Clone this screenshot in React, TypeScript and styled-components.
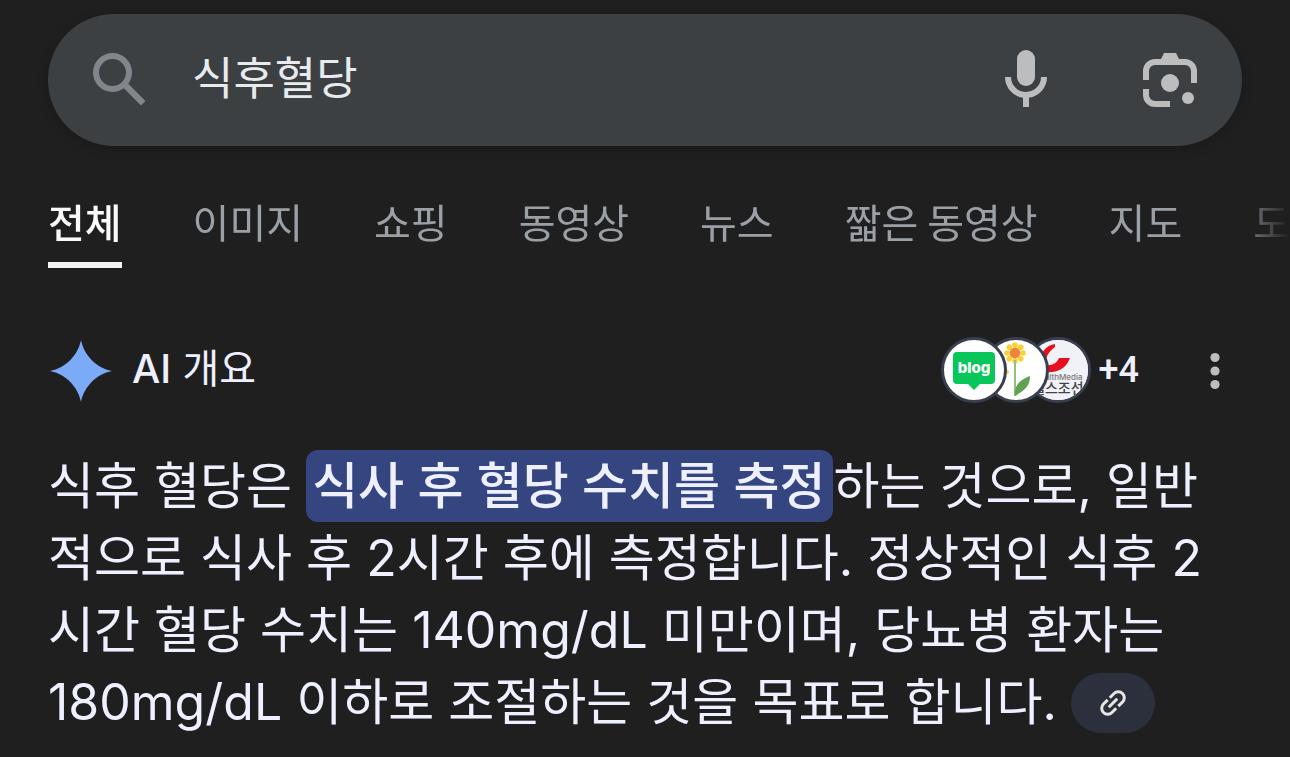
import React from "react";
import styled, { createGlobalStyle } from "styled-components";

const GlobalStyle = createGlobalStyle`
  * { box-sizing: border-box; }
  body {
    margin: 0;
    background: #1f1f1f;
    color: #eeefff;
    font-family: "Inter", "Noto Sans CJK KR", sans-serif;
    overflow-x: hidden;
  }
  button { border: 0; background: none; padding: 0; color: inherit; font: inherit; cursor: pointer; }
`;

const Page = styled.div`
  padding: 14px 0 24px;
`;

const SearchBar = styled.form`
  display: flex;
  align-items: center;
  height: 132px;
  margin: 0 48px;
  padding: 0 36px;
  border-radius: 66px;
  background: #3c4043;
  box-shadow: 0 3px 12px rgba(0, 0, 0, 0.2);
`;

const IconButton = styled.button<{ $color: string }>`
  flex: none;
  display: flex;
  color: ${(p) => p.$color};
`;

const Icon = styled.svg<{ $size: number; $color?: string }>`
  display: block;
  flex: none;
  width: ${(p) => p.$size}px;
  height: ${(p) => p.$size}px;
  fill: ${(p) => p.$color ?? "currentColor"};
`;

const SearchInput = styled.input`
  flex: 1;
  min-width: 0;
  margin: 0 36px;
  padding: 0 0 10px;
  border: 0;
  outline: 0;
  background: none;
  color: #e8eaed;
  font: 400 45px "Noto Sans CJK KR", sans-serif;
`;

const BarActions = styled.div`
  display: flex;
  gap: 72px;
`;

const Tabs = styled.nav`
  display: flex;
  gap: 71px;
  margin-top: 40px;
  padding: 8px 0 0 48px;
  overflow: hidden;
  mask-image: linear-gradient(to right, #000 calc(100% - 60px), transparent);
`;

const Tab = styled.a<{ $active?: boolean }>`
  flex: none;
  height: 74px;
  border-bottom: 6px solid ${(p) => (p.$active ? "#f1f3f4" : "transparent")};
  color: ${(p) => (p.$active ? "#f8f9fa" : "#9aa0a6")};
  font: ${(p) => (p.$active ? 500 : 400)} 40px/54px "Noto Sans CJK KR", sans-serif;
  text-decoration: none;
  white-space: nowrap;
`;

const Overview = styled.section`
  padding: 66px 48px 0;
`;

const OverviewHeader = styled.header`
  display: flex;
  align-items: center;
  height: 72px;
`;

const Title = styled.h1`
  flex: 1;
  margin: 0 0 0 18px;
  padding-bottom: 2px;
  font-size: 40px;
  line-height: 60px;
  font-weight: 400;
`;

const TitleStrong = styled.span`
  font-weight: 500;
`;

const Sources = styled.button`
  display: flex;
  align-items: center;
  font: 500 36px "Roboto", sans-serif;
`;

const FaviconStack = styled.span`
  display: flex;
  margin-right: 8px;
`;

const Favicon = styled.svg<{ $level: number }>`
  position: relative;
  z-index: ${(p) => p.$level};
  display: block;
  width: 66px;
  height: 66px;
  border: 3px solid #3a3f50;
  border-radius: 50%;
  background: #fff;
  font-family: "Inter", "Noto Sans CJK KR", sans-serif;

  &:not(:first-child) {
    margin-left: -24px;
  }
`;

const MenuButton = styled(IconButton)`
  margin: 0 -12px 0 43px;
`;

const Summary = styled.p`
  margin: 44px 0 0;
  padding-right: 24px;
  font-size: 50px;
  line-height: 72px;
`;

const Highlight = styled.mark`
  padding: 6px 8px 6px 6px;
  border-radius: 12px;
  background: #35457f;
  color: inherit;
  font-weight: 500;
`;

const LinkChip = styled.button`
  display: inline-flex;
  align-items: center;
  justify-content: center;
  width: 84px;
  height: 60px;
  margin-bottom: 6px;
  border-radius: 30px;
  background: #2c303d;
  color: #e8e8e3;
  vertical-align: middle;
`;

const tabs = ["전체", "이미지", "쇼핑", "동영상", "뉴스", "짧은 동영상", "지도", "도서"];

const petals = [0, 45, 90, 135, 180, 225, 270, 315];

export default function App() {
  return (
    <>
      <GlobalStyle />
      <Page>
        <SearchBar role="search" onSubmit={(e) => e.preventDefault()}>
          <IconButton $color="#80868b" type="submit" aria-label="검색">
            <Icon $size={72} viewBox="0 0 24 24">
              <path d="M20.49 19l-5.73-5.73C15.53 12.2 16 10.91 16 9.5A6.5 6.5 0 1 0 9.5 16c1.41 0 2.7-.47 3.77-1.24L19 20.49 20.49 19zM5 9.5C5 7.01 7.01 5 9.5 5S14 7.01 14 9.5 11.99 14 9.5 14 5 11.99 5 9.5z" />
            </Icon>
          </IconButton>
          <SearchInput type="text" aria-label="검색어" defaultValue="식후혈당" />
          <BarActions>
            <IconButton $color="#bdbdbd" type="button" aria-label="음성 검색">
              <Icon $size={72} viewBox="0 0 24 24">
                <rect x="9" y="2" width="6" height="12" rx="3" />
                <path d="M5 11a7 7 0 0 0 6 6.92V21h2v-3.08A7 7 0 0 0 19 11h-2a5 5 0 0 1-10 0z" />
              </Icon>
            </IconButton>
            <IconButton $color="#bdbdbd" type="button" aria-label="이미지로 검색">
              <Icon $size={72} viewBox="0 0 24 24">
                <circle cx="12" cy="13" r="3" />
                <circle cx="18" cy="18" r="2" />
                <path d="M3 12V9a4 4 0 0 1 4-4h2l1-2h4l1 2h2a4 4 0 0 1 4 4v4h-2V9a2 2 0 0 0-2-2H7a2 2 0 0 0-2 2v3zM3 15h2v2a2 2 0 0 0 2 2h5v2H7a4 4 0 0 1-4-4z" />
              </Icon>
            </IconButton>
          </BarActions>
        </SearchBar>

        <Tabs>
          {tabs.map((t, i) => (
            <Tab key={t} href="#" $active={i === 0}>{t}</Tab>
          ))}
        </Tabs>

        <Overview>
          <OverviewHeader>
            <Icon $size={66} $color="#7baaf7" viewBox="0 0 66 66">
              <path d="M33 3C36 18 48 31 64 34C48 37 36 50 33 65C30 50 18 37 2 34C18 31 30 18 33 3z" />
            </Icon>
            <Title><TitleStrong>AI</TitleStrong> 개요</Title>
            <Sources type="button">
              <FaviconStack>
                <Favicon $level={3} viewBox="0 0 60 60">
                  <path d="M13 12h34a4 4 0 0 1 4 4v24a4 4 0 0 1-4 4H36l-6 6-6-6H13a4 4 0 0 1-4-4V16a4 4 0 0 1 4-4z" fill="#07c65a" />
                  <text x="30" y="33" textAnchor="middle" fontSize="15" fontWeight="800" fill="#fff">blog</text>
                </Favicon>
                <Favicon $level={2} viewBox="0 0 60 60">
                  {petals.map((angle) => (
                    <circle key={angle} cx="29" cy="5" r="2.8" fill="#fdd02f" transform={`rotate(${angle} 29 13)`} />
                  ))}
                  <circle cx="29" cy="13" r="5.4" fill="#f0853a" />
                  <circle cx="21" cy="32" r="2" fill="#fdd02f" />
                  <path d="M28 20h2v36h-2z" fill="#8fc184" />
                  <path d="M29 56c-1-10 4-16 15-20 0 10-5 14-15 20z" fill="#5fa352" />
                </Favicon>
                <Favicon $level={1} viewBox="0 0 60 60">
                  <rect width="60" height="60" fill="#f1f2f8" />
                  <path d="M27 4C19 5 12 12 12 22C13 30 18 33 24 32C33 31 39 26 42 18L31 18C29 23 24 26 18 25C17 18 20 12 27 7z" fill="#e8101c" />
                  <text x="6" y="40" fontSize="8" fill="#777">HealthMedia</text>
                  <text x="4" y="53" fontSize="14" fontWeight="500" fill="#444">헬스조선</text>
                </Favicon>
              </FaviconStack>
              +4
            </Sources>
            <MenuButton $color="#bdbdbd" type="button" aria-label="더보기">
              <Icon $size={72} viewBox="0 0 72 72">
                <circle cx="33" cy="23.5" r="4.6" />
                <circle cx="33" cy="37" r="4.6" />
                <circle cx="33" cy="50.5" r="4.6" />
              </Icon>
            </MenuButton>
          </OverviewHeader>
          <Summary>
            식후 혈당은 <Highlight>식사 후 혈당 수치를 측정</Highlight>하는 것으로, 일반적으로 식사 후 2시간 후에 측정합니다. 정상적인 식후 2시간 혈당 수치는 140mg/dL 미만이며, 당뇨병 환자는 180mg/dL 이하로 조절하는 것을 목표로 합니다.{" "}
            <LinkChip type="button" aria-label="관련 링크">
              <Icon $size={36} viewBox="0 0 24 24">
                <path transform="rotate(-45 12 12)" d="M11 17H7a5 5 0 0 1 0-10h4v2H7a3 3 0 0 0 0 6h4zM8 13v-2h8v2zM13 17v-2h4a3 3 0 0 0 0-6h-4V7h4a5 5 0 0 1 0 10z" />
              </Icon>
            </LinkChip>
          </Summary>
        </Overview>
      </Page>
    </>
  );
}
